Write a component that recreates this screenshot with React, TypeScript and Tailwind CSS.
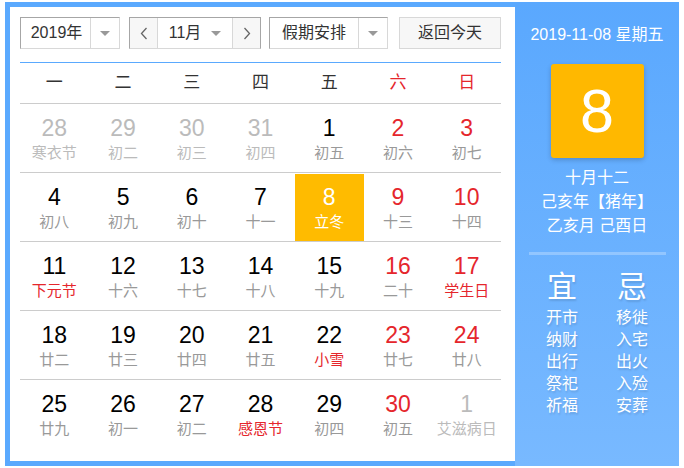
import React from 'react';

type Day = {
  d: number;
  lunar: string;
  other?: boolean;
  fest?: boolean;
  selected?: boolean;
};

const weeks: Day[][] = [
  [
    { d: 28, lunar: '寒衣节', other: true },
    { d: 29, lunar: '初二', other: true },
    { d: 30, lunar: '初三', other: true },
    { d: 31, lunar: '初四', other: true },
    { d: 1, lunar: '初五' },
    { d: 2, lunar: '初六' },
    { d: 3, lunar: '初七' },
  ],
  [
    { d: 4, lunar: '初八' },
    { d: 5, lunar: '初九' },
    { d: 6, lunar: '初十' },
    { d: 7, lunar: '十一' },
    { d: 8, lunar: '立冬', selected: true },
    { d: 9, lunar: '十三' },
    { d: 10, lunar: '十四' },
  ],
  [
    { d: 11, lunar: '下元节', fest: true },
    { d: 12, lunar: '十六' },
    { d: 13, lunar: '十七' },
    { d: 14, lunar: '十八' },
    { d: 15, lunar: '十九' },
    { d: 16, lunar: '二十' },
    { d: 17, lunar: '学生日', fest: true },
  ],
  [
    { d: 18, lunar: '廿二' },
    { d: 19, lunar: '廿三' },
    { d: 20, lunar: '廿四' },
    { d: 21, lunar: '廿五' },
    { d: 22, lunar: '小雪', fest: true },
    { d: 23, lunar: '廿七' },
    { d: 24, lunar: '廿八' },
  ],
  [
    { d: 25, lunar: '廿九' },
    { d: 26, lunar: '初一' },
    { d: 27, lunar: '初二' },
    { d: 28, lunar: '感恩节', fest: true },
    { d: 29, lunar: '初四' },
    { d: 30, lunar: '初五' },
    { d: 1, lunar: '艾滋病日', other: true },
  ],
];

const weekdays = ['一', '二', '三', '四', '五', '六', '日'];
const yi = ['开市', '纳财', '出行', '祭祀', '祈福'];
const ji = ['移徙', '入宅', '出火', '入殓', '安葬'];

const Caret = () => <span className="w-0 h-0 border-x-[5px] border-x-transparent border-t-[5px] border-t-[#999]" />;

const DayCell: React.FC<{ day: Day; col: number }> = ({ day, col }) => {
  const weekend = col >= 5;
  let numColor = 'text-black';
  let lunarColor = 'text-[#999]';
  if (day.other) {
    numColor = 'text-[#bbb]';
    lunarColor = 'text-[#bbb]';
  } else if (weekend) {
    numColor = 'text-[#e5262c]';
  }
  if (day.fest) lunarColor = 'text-[#e5262c]';
  if (day.selected) {
    numColor = 'text-white';
    lunarColor = 'text-white';
  }
  return (
    <div className={`flex flex-col items-center pt-[9px] mt-px ${day.selected ? 'bg-[#ffbb00]' : ''}`}>
      <span className={`text-[23px] leading-[28px] ${numColor}`}>{day.d}</span>
      <span className={`text-[15px] leading-[22px] ${lunarColor}`}>{day.lunar}</span>
    </div>
  );
};

export default function App() {
  return (
    <div className="pl-[5px] pt-[2px] font-[Liberation_Sans,Noto_Sans_CJK_SC,sans-serif]">
      <div className="flex w-[674px] h-[464px]">
        <div className="w-[510px] border-[5px] border-r-0 border-[#5aa9fe] bg-white pl-[10px] pr-[14px] pt-[10px]">
          <div className="flex h-[32px] text-[16px] text-[#333]">
            <div className="flex w-[100px] border border-[#a6a6a6] border-r-[#d8d8d8] border-b-[#d8d8d8]">
              <div className="w-[69px] flex items-center justify-center pl-[2px]">2019年</div>
              <div className="flex-1 flex items-center justify-center border-l border-[#d8d8d8]">
                <Caret />
              </div>
            </div>
            <div className="flex w-[132px] ml-[9px] border border-[#a6a6a6] border-b-[#d8d8d8]">
              <div className="w-[28px] flex items-center justify-center bg-[#f7f7f7] border-r border-[#d8d8d8] text-[#666]">
                <svg width="8" height="13" viewBox="0 0 8 13"><path d="M6.5 1 1.5 6.5l5 5.5" fill="none" stroke="#666" strokeWidth="1.3" /></svg>
              </div>
              <div className="flex-1 flex items-center justify-center gap-[10px]">
                <span>11月</span>
                <Caret />
              </div>
              <div className="w-[28px] flex items-center justify-center bg-[#f7f7f7] border-l border-[#d8d8d8]">
                <svg width="8" height="13" viewBox="0 0 8 13"><path d="M1.5 1l5 5.5-5 5.5" fill="none" stroke="#666" strokeWidth="1.3" /></svg>
              </div>
            </div>
            <div className="flex w-[119px] ml-[8px] border border-[#a6a6a6] border-r-[#d8d8d8] border-b-[#d8d8d8]">
              <div className="w-[88px] flex items-center justify-center">假期安排</div>
              <div className="flex-1 flex items-center justify-center border-l border-[#d8d8d8]">
                <Caret />
              </div>
            </div>
            <button className="ml-[11px] w-[102px] border border-[#d8d8d8] bg-[#f7f7f7] text-[#333] text-[16px]">返回今天</button>
          </div>

          <div className="mt-[13px] border-t border-[#5aa9fe] border-b border-b-[#ccc] h-[42px] grid grid-cols-7 items-center text-[17px]">
            {weekdays.map((w, i) => (
              <div key={w} className={`text-center ${i >= 5 ? 'text-[#e5262c]' : 'text-[#333]'}`}>
                {w}
              </div>
            ))}
          </div>

          {weeks.map((week, r) => (
            <div key={r} className={`grid grid-cols-7 h-[69px] ${r < weeks.length - 1 ? 'border-b border-[#ccc]' : ''}`}>
              {week.map((day, c) => (
                <DayCell key={c} day={day} col={c} />
              ))}
            </div>
          ))}
        </div>

        <div className="w-[164px] bg-gradient-to-b from-[#5aa8fe] to-[#78b9ff] text-white flex flex-col items-center">
          <div className="mt-[22px] text-[16px] leading-[22px]">2019-11-08 星期五</div>
          <div className="mt-[18px] w-[93px] h-[94px] rounded-[3px] bg-[#ffb800] shadow-[0_2px_5px_rgba(0,0,0,0.2)] flex items-center justify-center text-[61px] leading-none">
            8
          </div>
          <div className="mt-[8px] text-[16px] leading-[24px] text-center">
            <div>十月十二</div>
            <div>己亥年【猪年】</div>
            <div>乙亥月 己酉日</div>
          </div>
          <div className="mt-[14px] w-[137px] h-[3px] bg-[#92c6ff]" />
          <div className="mt-[12px] flex gap-[38px] [text-shadow:1px_2px_2px_rgba(0,0,0,0.12)]">
            <div className="flex flex-col items-center w-[32px]">
              <div className="text-[30px] leading-[40px]">宜</div>
              <div className="text-[16px] leading-[22px] flex flex-col items-center">
                {yi.map((t) => (
                  <span key={t}>{t}</span>
                ))}
              </div>
            </div>
            <div className="flex flex-col items-center w-[32px]">
              <div className="text-[30px] leading-[40px]">忌</div>
              <div className="text-[16px] leading-[22px] flex flex-col items-center">
                {ji.map((t) => (
                  <span key={t}>{t}</span>
                ))}
              </div>
            </div>
          </div>
        </div>
      </div>
    </div>
  );
}
